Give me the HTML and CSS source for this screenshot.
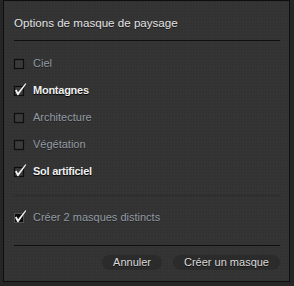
FILE: index.html
```html
<!DOCTYPE html>
<html lang="fr">
<head>
<meta charset="utf-8">
<title>Options de masque de paysage</title>
<link rel="stylesheet" href="styles.css">
</head>
<body>
<div class="dialog">
  <div class="title">Options de masque de paysage</div>
  <div class="rule dark"></div>
  <div class="list">
    <label class="row">
      <svg class="cb" width="10" height="10" viewBox="0 0 10 10"><rect x="0.5" y="0.5" width="9" height="9" class="box"/></svg>
      <span class="lbl off">Ciel</span>
    </label>
    <label class="row">
      <svg class="cb" width="10" height="10" viewBox="0 0 10 10"><rect x="0.5" y="0.5" width="9" height="9" class="box"/><polygon class="tick" points="1,4.5 2.6,3.6 4,6.2 11.4,-2.8 12.4,-2.2 4.3,9.2 3.4,9.2"/></svg>
      <span class="lbl on">Montagnes</span>
    </label>
    <label class="row">
      <svg class="cb" width="10" height="10" viewBox="0 0 10 10"><rect x="0.5" y="0.5" width="9" height="9" class="box"/></svg>
      <span class="lbl off">Architecture</span>
    </label>
    <label class="row">
      <svg class="cb" width="10" height="10" viewBox="0 0 10 10"><rect x="0.5" y="0.5" width="9" height="9" class="box"/></svg>
      <span class="lbl off">Végétation</span>
    </label>
    <label class="row">
      <svg class="cb" width="10" height="10" viewBox="0 0 10 10"><rect x="0.5" y="0.5" width="9" height="9" class="box"/><polygon class="tick" points="1,4.5 2.6,3.6 4,6.2 11.4,-2.8 12.4,-2.2 4.3,9.2 3.4,9.2"/></svg>
      <span class="lbl on">Sol artificiel</span>
    </label>
  </div>
  <div class="rule soft"></div>
  <label class="row option">
    <svg class="cb" width="10" height="10" viewBox="0 0 10 10"><rect x="0.5" y="0.5" width="9" height="9" class="box black"/><polygon class="tick" points="1,4.5 2.6,3.6 4,6.2 11.4,-2.8 12.4,-2.2 4.3,9.2 3.4,9.2"/></svg>
    <span class="lbl off">Créer 2 masques distincts</span>
  </label>
  <div class="rule dark last"></div>
  <div class="actions">
    <button class="btn">Annuler</button>
    <button class="btn">Créer un masque</button>
  </div>
</div>
</body>
</html>
```
FILE: styles.css
```css
html, body {
  margin: 0;
  padding: 0;
  background: #262626;
  width: 294px;
  height: 286px;
  overflow: hidden;
}
.dialog {
  box-sizing: border-box;
  width: 287px;
  height: 282px;
  margin-left: 3px;
  border: 1px solid #0e0e0e;
  background-color: #353535;
  background-image: radial-gradient(circle at 1px 1px, #303030 0.6px, transparent 0.9px);
  background-size: 3px 3px;
  padding: 0 9px 0 10px;
  font-family: "Liberation Sans", Arial, sans-serif;
  font-size: 11px;
  display: flex;
  flex-direction: column;
}
.title {
  padding-top: 14px;
  padding-bottom: 9px;
  line-height: 16px;
  font-size: 11.6px;
  color: #e2e2e2;
  text-shadow: 0 1px 0 #1c1c1c;
}
.rule {
  height: 1px;
  flex: none;
}
.rule.dark { background: #101010; }
.rule.soft { background: #2c2c2c; }
.list {
  padding-top: 8px;
  padding-bottom: 11px;
  display: flex;
  flex-direction: column;
}
.row {
  height: 27px;
  display: flex;
  align-items: center;
}
.option {
  margin-top: 7px;
  margin-bottom: 15px;
}
.cb {
  flex: none;
  overflow: visible;
  margin-right: 9px;
  margin-top: 2px;
}
.box {
  fill: #3a3a3a;
  stroke: #0d0d0d;
  stroke-width: 1.2;
}
.box.black {
  fill: #0c0c0c;
  stroke: #505050;
  stroke-width: 1;
}
.tick {
  fill: #f2f2f2;
  stroke: #1a1a1a;
  stroke-width: 0.4;
  paint-order: stroke;
}
.lbl {
  line-height: 16px;
}
.lbl.off {
  color: #929ba4;
  text-shadow: 0 1px 0 #222;
}
.lbl.on {
  color: #f0f0f0;
  font-weight: bold;
  letter-spacing: -0.25px;
  text-shadow: 0 1px 1px #000;
}
.actions {
  padding-top: 9px;
  display: flex;
  justify-content: flex-end;
  gap: 11px;
}
.btn {
  font-family: "Liberation Sans", Arial, sans-serif;
  font-size: 11px;
  height: 15px;
  line-height: 15px;
  padding: 0 11px;
  border: none;
  border-radius: 8px;
  background: #2b2b2b;
  color: #dadada;
  text-shadow: 0 1px 0 #111;
  cursor: default;
}
```
